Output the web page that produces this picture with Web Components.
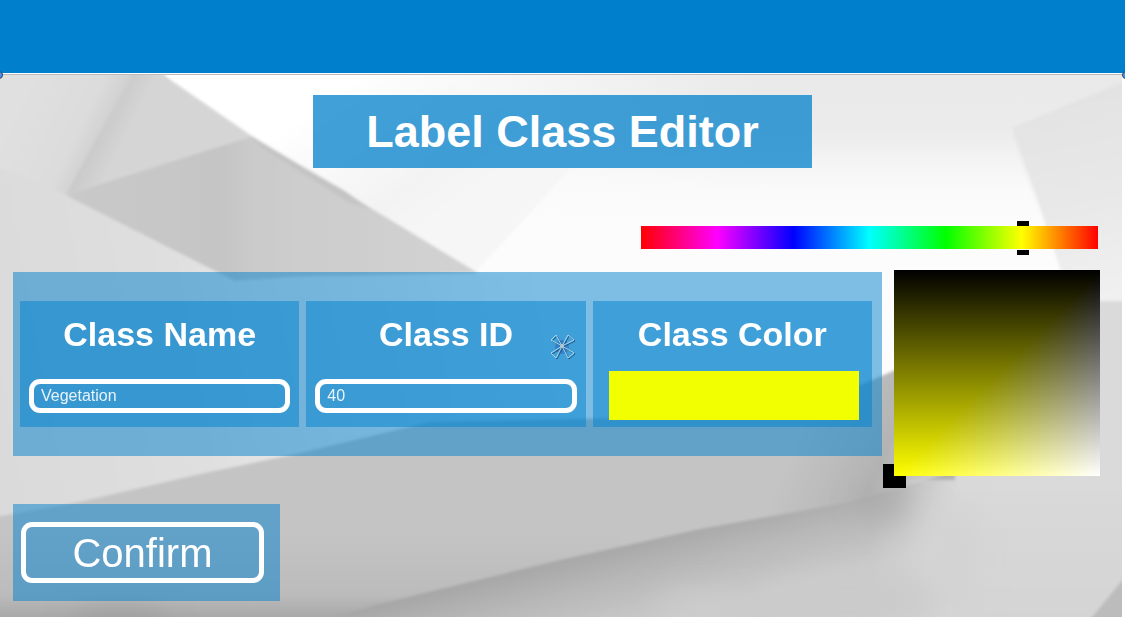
<!DOCTYPE html>
<html lang="en">
<head>
<meta charset="utf-8">
<meta name="viewport" content="width=device-width, initial-scale=1">
<title>Label Class Editor</title>
<style>
  html, body { margin: 0; min-height: 100%; background: #fff; }
  body { font-family: "Liberation Sans", Arial, sans-serif; color: #fff; --accent: 0 127 204; }
</style>
</head>
<body>
<label-editor></label-editor>

<script>
const define = (name, html, setup) => {
  const template = document.createElement('template');
  template.innerHTML = html;
  customElements.define(name, class extends HTMLElement {
    connectedCallback() {
      if (this.shadowRoot) return;
      const root = this.attachShadow({ mode: 'open' });
      root.append(template.content.cloneNode(true));
      if (setup) setup(this, root);
    }
  });
};

/* Blue bar with the resize grips on its lower corners */
define('top-bar', `
  <style>
    :host { display: block; position: relative; height: 73px; background: rgb(var(--accent)); border-bottom: 1px solid #fff; overflow: visible; z-index: 1; }
    .grip { position: absolute; bottom: -6px; width: 6px; height: 6px; border: 1px solid #26415f; border-radius: 50%; background: #4c94ec; }
    .start { left: -5px; }
    .end { right: -5px; }
  </style>
  <span class="grip start"></span><span class="grip end"></span>
`);

/* Faceted paper background */
define('facet-backdrop', `
  <style>
    :host { display: block; position: absolute; inset: 0 3px 0 0; overflow: hidden; background: #f8f8f8; border-top: 1px solid #bcbabc; }
    svg { display: block; width: 100%; height: 100%; }
  </style>
  <svg viewBox="0 75 1122 542" preserveAspectRatio="none" aria-hidden="true">
    <defs>
      <filter id="soft" x="-5%" y="-5%" width="110%" height="110%"><feGaussianBlur stdDeviation="1.5"/></filter>
      <filter id="haze" x="-50%" y="-50%" width="200%" height="200%"><feGaussianBlur stdDeviation="14"/></filter>
      <linearGradient id="sky" gradientUnits="userSpaceOnUse" x1="0" y1="75" x2="0" y2="230"><stop offset="0" stop-color="#e9e9e9"/><stop offset=".45" stop-color="#ececec"/><stop offset="1" stop-color="#fcfcfc"/></linearGradient>
      <linearGradient id="glow" gradientUnits="userSpaceOnUse" x1="330" y1="75" x2="760" y2="110"><stop offset="0" stop-color="#fff"/><stop offset=".25" stop-color="#fafafa"/><stop offset="1" stop-color="#fafafa" stop-opacity="0"/></linearGradient>
      <linearGradient id="fold" gradientUnits="userSpaceOnUse" x1="320" y1="100" x2="420" y2="240"><stop offset="0" stop-color="#fff"/><stop offset=".7" stop-color="#f3f3f3"/><stop offset="1" stop-color="#f6f6f6"/></linearGradient>
      <linearGradient id="clear" gradientUnits="userSpaceOnUse" x1="0" y1="130" x2="0" y2="215"><stop offset="0" stop-color="#fcfcfc" stop-opacity="0"/><stop offset="1" stop-color="#fcfcfc"/></linearGradient>
      <linearGradient id="left" gradientUnits="userSpaceOnUse" x1="20" y1="100" x2="103" y2="141"><stop offset="0" stop-color="#e0e0e0"/><stop offset=".7" stop-color="#dcdcdc"/><stop offset="1" stop-color="#cfcfcf"/></linearGradient>
      <linearGradient id="ridge" gradientUnits="userSpaceOnUse" x1="100" y1="135" x2="122" y2="146"><stop offset="0" stop-color="#cbcbcb"/><stop offset="1" stop-color="#d5d5d5"/></linearGradient>
      <linearGradient id="dark" gradientUnits="userSpaceOnUse" x1="70" y1="0" x2="475" y2="0"><stop offset="0" stop-color="#c9c9c9"/><stop offset=".38" stop-color="#c5c5c5"/><stop offset=".46" stop-color="#cbcbcb"/><stop offset="1" stop-color="#d2d2d2"/></linearGradient>
      <linearGradient id="mid" gradientUnits="userSpaceOnUse" x1="0" y1="400" x2="540" y2="300"><stop offset="0" stop-color="#dadada"/><stop offset=".35" stop-color="#dfdfdf"/><stop offset="1" stop-color="#fcfcfc"/></linearGradient>
      <linearGradient id="plane" gradientUnits="userSpaceOnUse" x1="800" y1="430" x2="960" y2="500"><stop offset="0" stop-color="#c4c4c4"/><stop offset=".5" stop-color="#b4b4b4"/><stop offset=".9" stop-color="#d6d6d6"/><stop offset="1" stop-color="#dadada"/></linearGradient>
      <linearGradient id="lower" gradientUnits="userSpaceOnUse" x1="640" y1="535" x2="662" y2="620"><stop offset="0" stop-color="#a5a5a5"/><stop offset=".4" stop-color="#b6b6b6"/><stop offset="1" stop-color="#cbcbcb"/></linearGradient>
      <linearGradient id="lowerEnd" gradientUnits="userSpaceOnUse" x1="870" y1="0" x2="955" y2="0"><stop offset="0" stop-color="#d8d8d8" stop-opacity="0"/><stop offset="1" stop-color="#d8d8d8"/></linearGradient>
      <linearGradient id="foot" gradientUnits="userSpaceOnUse" x1="0" y1="530" x2="0" y2="617"><stop offset="0" stop-color="#bcbcbc" stop-opacity="0"/><stop offset=".75" stop-color="#bbb"/><stop offset="1" stop-color="#a8a8a8"/></linearGradient>
      <linearGradient id="shore" gradientUnits="userSpaceOnUse" x1="0" y1="470" x2="0" y2="617"><stop offset="0" stop-color="#dadada"/><stop offset="1" stop-color="#d4d4d4"/></linearGradient>
      <linearGradient id="wing" gradientUnits="userSpaceOnUse" x1="1040" y1="110" x2="1080" y2="300"><stop offset="0" stop-color="#e3e3e3"/><stop offset=".5" stop-color="#e8e8e8"/><stop offset="1" stop-color="#f0f0f0"/></linearGradient>
    </defs>
    <rect x="0" y="75" width="1122" height="542" fill="url(#sky)"/>
    <path d="M160 70H800V230H300Z" fill="url(#glow)"/>
    <g filter="url(#soft)">
      <path d="M252 136L162 70H420L590 150L475 272Z" fill="url(#fold)"/>
      <path d="M-10 160L65 195L240 281L475 270L560 272L1130 290V640H-10Z" fill="url(#mid)"/>
      <path d="M475 274L605 130H1010L1065 290Z" fill="url(#clear)"/>
      <path d="M-10 65H140L65 195L-10 164Z" fill="url(#left)"/>
      <path d="M138 65H148L162 74L252 136L65 195Z" fill="url(#ridge)"/>
      <path d="M65 195L252 136L478 273L300 277L235 281Z" fill="url(#dark)"/>
      <path d="M250 136L345 191L372 210L350 203L262 148Z" fill="#c4c4c4"/>
      <path d="M1012 128L1130 79V310H1070L1060 268L1036 195Z" fill="url(#wing)"/>
      <path d="M-10 518L75 503L200 474L300 453L430 422L620 418L860 385L895 370L1090 301H1130V630H-10Z" fill="url(#plane)"/>
      <path d="M-10 530H620V630H-10Z" fill="url(#foot)"/>
      <path d="M320 622L375 605L560 560L700 529L850 502L960 470V630H320Z" fill="url(#lower)"/>
      <path d="M870 480H1130V630H870Z" fill="url(#lowerEnd)"/>
      <path d="M955 472H1130V630H955Z" fill="url(#shore)"/>
      <path d="M1088 622L1130 571V622Z" fill="#bcbcbc"/>
    </g>
    <g filter="url(#haze)">
      <ellipse cx="884" cy="500" rx="24" ry="20" fill="#a8a8a8" opacity=".7"/>
      <ellipse cx="955" cy="560" rx="26" ry="60" fill="#d3d3d3"/>
      <ellipse cx="700" cy="605" rx="46" ry="12" fill="#ccc"/>
      <ellipse cx="850" cy="600" rx="90" ry="24" fill="#cbcbcb"/>
      <ellipse cx="120" cy="622" rx="50" ry="8" fill="#989898"/>
    </g>
  </svg>
`);

define('editor-title', `
  <style>
    :host { display: block; background: rgb(var(--accent) / .74); padding: 0 53px; }
    h1 { margin: 0; font-size: 45px; line-height: 73px; font-weight: 700; text-align: center; }
  </style>
  <h1><slot></slot></h1>
`);

/* Hue strip: the thumb is visible only above and below the strip */
define('hue-slider', `
  <style>
    :host { display: block; }
    input { appearance: none; -webkit-appearance: none; display: block; width: 100%; height: 23px; margin: 0; outline: none;
      background: linear-gradient(90deg, #f00, #f0f, #00f, #0ff, #0f0, #ff0, #f00); }
    input::-webkit-slider-thumb { -webkit-appearance: none; width: 12px; height: 34px; border: 0; border-radius: 0;
      background: linear-gradient(#000 5px, transparent 5px 29px, #000 29px); }
  </style>
  <input type="range" min="0" max="360" value="304" aria-label="Hue">
`);

/* Shade square, with its marker tucked behind the lower left corner */
define('shade-picker', `
  <style>
    :host { display: block; position: relative; aspect-ratio: 1; }
    .marker { position: absolute; left: -11px; bottom: -12px; width: 23px; height: 24px; background: #000; }
    .area { position: relative; height: 100%;
      background: linear-gradient(135deg, #000 50%, #00f), linear-gradient(#000, #ff0); background-blend-mode: screen; }
  </style>
  <div class="marker"></div>
  <div class="area" role="img" aria-label="Shade"></div>
`);

define('class-field', `
  <style>
    :host { display: block; position: relative; box-sizing: border-box; background: rgb(var(--accent) / .5); padding: 13px 9px 6px; }
    h2 { margin: 0 0 17px; font-size: 34px; line-height: 40px; font-weight: 700; text-align: center; }
    .body { display: flex; height: 50px; align-items: center; }
    input { box-sizing: border-box; width: 100%; min-width: 0; margin: 0; outline: none; }
    input[type=text] { height: 34px; padding: 0 7px; border: 5px solid #fff; border-radius: 11px; background: transparent; color: #e6f3fc; font: 16px/20px "Liberation Sans", Arial, sans-serif; }
    input[type=color] { appearance: none; -webkit-appearance: none; align-self: flex-start; height: 49px; margin: 0 4px 0 7px; padding: 0; border: 0; background: none; }
    input::-webkit-color-swatch-wrapper { padding: 0; }
    input::-webkit-color-swatch { border: 0; border-radius: 0; }
  </style>
  <h2><label for="field"></label></h2>
  <div class="body"><input id="field"></div>
  <slot></slot>
`, (host, root) => {
  root.querySelector('label').textContent = host.getAttribute('label');
  const input = root.querySelector('input');
  input.setAttribute('type', host.getAttribute('type') || 'text');
  input.value = host.getAttribute('value');
});

/* Crossed pointer that floats over the panel */
define('cross-pointer', `
  <style>
    :host { display: block; position: absolute; right: 10px; top: 33px; width: 26px; height: 26px; pointer-events: none; }
    svg { display: block; }
  </style>
  <svg width="26" height="26" viewBox="0 0 26 26" fill="none" aria-hidden="true">
    <circle cx="12" cy="13" r="7" fill="#2474c8" opacity=".7"/>
    <circle cx="12" cy="13" r="6" stroke="#5a7fc0" stroke-dasharray="2 2"/>
    <g stroke="#24567c" transform="translate(1 1)">
      <path d="M12 12L1 6L6 1ZM12 12L18 1L24 6ZM12 12L1 19L6 24ZM12 12L18 24L24 19Z"/>
    </g>
    <path stroke="#a9d8ef" d="M12 12L1 6L6 1ZM12 12L18 1L24 6ZM12 12L1 19L6 24ZM12 12L18 24L24 19Z"/>
    <circle cx="12" cy="12" r="2" fill="#b4c8d2"/>
  </svg>
`);

define('class-panel', `
  <style>
    :host { display: grid; grid-template-columns: repeat(3, minmax(0, 1fr)); gap: 7px; padding: 29px 10px 29px 7px; background: rgb(var(--accent) / .5); }
  </style>
  <slot></slot>
`);

define('confirm-action', `
  <style>
    :host { display: block; background: rgb(var(--accent) / .5); padding: 18px 16px 18px 8px; }
    button { display: block; box-sizing: border-box; width: 243px; height: 61px; margin: 0; padding: 0; border: 5px solid #fff; border-radius: 11px; background: transparent; color: #fff; font: 40px/48px "Liberation Sans", Arial, sans-serif; }
  </style>
  <button type="button"><slot></slot></button>
`);

define('label-editor', `
  <style>
    :host { display: flex; flex-direction: column; min-height: 100vh; }
    main { position: relative; flex: 1; display: grid; grid-template-columns: minmax(0, 1fr) 206px; grid-template-rows: repeat(4, auto); align-content: start; column-gap: 12px; padding: 21px 25px 16px 13px; }
    editor-title, hue-slider, class-panel, shade-picker, confirm-action { z-index: 1; }
    editor-title { grid-column: 1 / -1; justify-self: center; margin-left: 12px; }
    hue-slider { grid-column: 1 / -1; justify-self: end; width: 42%; margin: 58px 2px 21px 0; }
    class-panel { align-self: start; margin-top: 2px; }
    shade-picker { align-self: start; }
    confirm-action { grid-column: 1; justify-self: start; margin-top: 28px; }
  </style>
  <top-bar></top-bar>
  <main>
    <facet-backdrop></facet-backdrop>
    <editor-title>Label Class Editor</editor-title>
    <hue-slider></hue-slider>
    <class-panel>
      <class-field label="Class Name" value="Vegetation"></class-field>
      <class-field label="Class ID" value="40"><cross-pointer></cross-pointer></class-field>
      <class-field label="Class Color" type="color" value="#f2ff00"></class-field>
    </class-panel>
    <shade-picker></shade-picker>
    <confirm-action>Confirm</confirm-action>
  </main>
`);
</script>
</body>
</html>
